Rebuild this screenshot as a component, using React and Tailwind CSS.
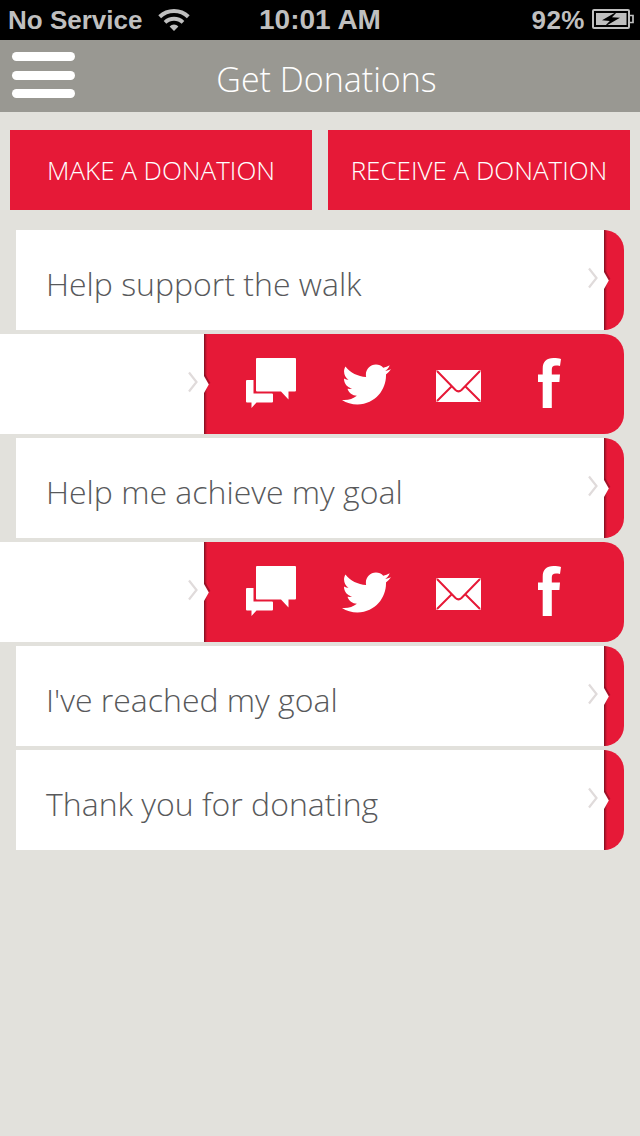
import { FaTwitter } from "react-icons/fa";

const rows = [
  { id: 1, title: "Help support the walk" },
  { id: 2, open: true },
  { id: 3, title: "Help me achieve my goal" },
  { id: 4, open: true },
  { id: 5, title: "I've reached my goal" },
  { id: 6, title: "Thank you for donating" },
];

const WifiIcon = () => (
  <svg className="ml-[16px] mt-[8px] w-[32px] h-[24px]" viewBox="0 0 32 24" fill="none" stroke="#bfbfbf">
    <path d="M1.7 8.7a20.5 20.5 0 0 1 28.6 0" strokeWidth="4" />
    <path d="M7 14.4a12.9 12.9 0 0 1 18 0" strokeWidth="3.8" />
    <path d="M11.6 18.4a6.3 6.3 0 0 1 8.8 0L16 23z" fill="#bfbfbf" stroke="none" />
  </svg>
);

const BatteryIcon = () => (
  <svg className="ml-[7px] mt-[9px] w-[43px] h-[20px]" viewBox="0 0 43 20">
    <rect x="1" y="1" width="36" height="18" rx="1" fill="none" stroke="#bfbfbf" strokeWidth="2" />
    <path d="M38 6.5h3v7h-3" fill="none" stroke="#bfbfbf" strokeWidth="1.7" />
    <rect x="4" y="4" width="30.5" height="12" fill="#bfbfbf" />
    <path d="M26 2L10 11.3l7.8.6L12 18l16-9.2-8-.5z" fill="#000" />
  </svg>
);

const ChatIcon = () => (
  <svg className="w-[50px] h-[50px]" viewBox="0 0 50 50" fill="#fff">
    <path d="M11 0h38a1 1 0 0 1 1 1v31.5a1 1 0 0 1-1 1h-6.500v8L35 33.500H11a1 1 0 0 1-1-1V1a1 1 0 0 1 1-1z" />
    <path d="M1 22h6.500v13.500H26a1 1 0 0 1 1 1V43.500a1 1 0 0 1-1 1H10.500L5.500 50v-5.500H1a1 1 0 0 1-1-1V23a1 1 0 0 1 1-1z" />
  </svg>
);

const MailIcon = () => (
  <svg className="w-[45px] h-[32px]" viewBox="0 0 45 32">
    <rect width="45" height="32" rx="1.5" fill="#fff" />
    <path
      d="M1 1l18.500 19q3 2.700 6 0L44 1M1 31l14.500-14.500M44 31L29.500 16.500"
      fill="none"
      stroke="#e61937"
      strokeWidth="2"
    />
  </svg>
);

const FacebookIcon = () => (
  <svg className="w-[23px] h-[50px]" viewBox="0 0 23 50" fill="#fff">
    <path d="M4.700 50V24H0v-7.500h4.700V11C4.700 3.500 8.500 0 15.500 0c3 0 5.500.3 7.500.9l-1 7.100c-1.400-.4-2.600-.5-4-.5-3 0-4.200 1.300-4.200 4v5h8.200l-.6 7.500h-7.600v26z" />
  </svg>
);

const Chevron = () => (
  <svg className="w-[10px] h-[22px] mr-[6px] mb-[4px]" viewBox="0 0 10 22" fill="none" stroke="#e0dbdb" strokeWidth="2.2">
    <path d="M1 1.500l7.500 9.500L1 20.500" />
  </svg>
);

// shaded edge of the panel, with the pointed tab in the middle
const Edge = () => (
  <svg className="absolute left-0 top-0 w-[8px] h-[100px]" viewBox="0 0 8 100">
    <defs>
      <linearGradient id="shade">
        <stop offset="0" stopColor="#6b0f1c" stopOpacity="0.9" />
        <stop offset="0.5" stopColor="#a01228" stopOpacity="0.5" />
        <stop offset="1" stopColor="#e61937" stopOpacity="0" />
      </linearGradient>
    </defs>
    <rect width="4" height="100" fill="url(#shade)" />
    <path d="M.5 41L5.500 49.500" fill="none" stroke="#8c1024" strokeWidth="2" strokeOpacity="0.7" />
    <path d="M0 42l4.800 8.500L0 59z" fill="#fff" />
  </svg>
);

const Row = ({ title, open }) => {
  if (open) {
    return (
      <div className="flex h-[100px] w-[624px]">
        <div className="flex w-[204px] items-center justify-end bg-white">
          <Chevron />
        </div>
        <div className="relative w-[420px] overflow-hidden rounded-r-[20px] bg-[#e61937]">
          <Edge />
          <div className="flex pl-[42px] pt-[24px] items-start">
            <ChatIcon />
            <FaTwitter className="ml-[46px] mt-[2px] size-[49px] text-white" />
            <div className="ml-[45px] mt-[12px]">
              <MailIcon />
            </div>
            <div className="ml-[57px]">
              <FacebookIcon />
            </div>
          </div>
        </div>
      </div>
    );
  }

  return (
    <div className="ml-4 flex h-[100px] w-[608px]">
      <div className="flex w-[588px] items-center justify-between bg-white pl-[30px]">
        <p className="pt-[8px] text-[32px] font-light whitespace-nowrap text-[#58595b]">{title}</p>
        <Chevron />
      </div>
      <div className="relative w-[20px] overflow-hidden rounded-r-[20px] bg-[#e61937]">
        <Edge />
      </div>
    </div>
  );
};

const App = () => {
  return (
    <div className="h-[1136px] w-[640px] overflow-hidden bg-[#e2e1dc] font-['Open_Sans',sans-serif]">
      <div className="grid h-[40px] grid-cols-3 bg-black font-['Liberation_Sans',sans-serif] text-[26px] leading-[40px] font-bold text-[#bfbfbf]">
        <div className="flex pl-[8px]">
          <span className="whitespace-nowrap">No Service</span>
          <WifiIcon />
        </div>
        <span className="text-center text-[28px] leading-[40px]">10:01 AM</span>
        <div className="flex justify-end pr-[5px]">
          <span className="tracking-[0.5px]">92%</span>
          <BatteryIcon />
        </div>
      </div>

      <div className="grid h-[72px] grid-cols-[75px_1fr_75px] bg-[#999892]">
        <div className="flex flex-col gap-[9.5px] pl-[12px] pt-[12px]">
          <div className="h-[9px] rounded-full bg-white" />
          <div className="h-[9px] rounded-full bg-white" />
          <div className="h-[9px] rounded-full bg-white" />
        </div>
        <h1 className="pt-[6px] pl-[13px] text-center text-[34px] leading-[66px] font-light text-white">Get Donations</h1>
      </div>

      <div className="flex gap-4 px-[10px] pt-[18px] text-[26px] font-light text-white">
        <button className="h-[80px] flex-1 bg-[#e61937]">MAKE A DONATION</button>
        <button className="h-[80px] flex-1 bg-[#e61937]">RECEIVE A DONATION</button>
      </div>

      <div className="mt-5 flex flex-col gap-1">
        {rows.map((row) => (
          <Row key={row.id} title={row.title} open={row.open} />
        ))}
      </div>
    </div>
  );
};

export default App;
